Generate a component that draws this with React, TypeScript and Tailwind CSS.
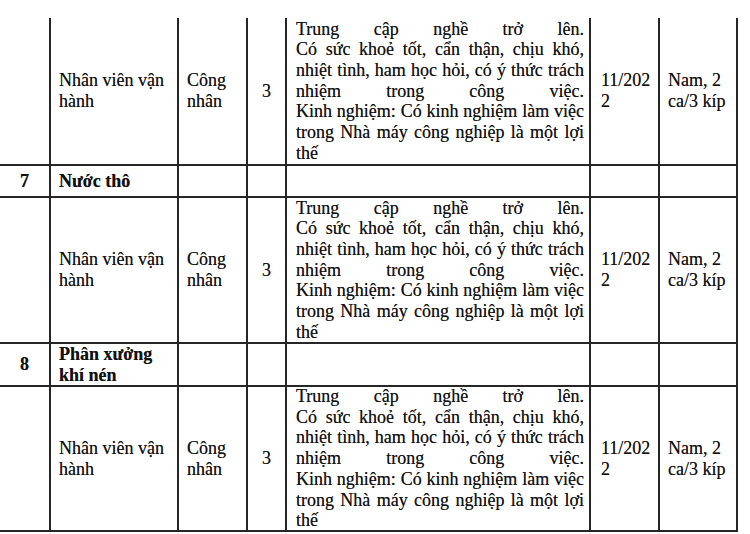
const descLines = [
  "Trung cập nghề trở lên.",
  "Có sức khoẻ tốt, cẩn thận, chịu khó,",
  "nhiệt tình, ham học hỏi, có ý thức trách",
  "nhiệm trong công việc.",
  "Kinh nghiệm: Có kinh nghiệm làm việc",
  "trong Nhà máy công nghiệp là một lợi",
];

const cell = "border-r-2 border-b-2 border-[#262626] flex flex-col justify-center";

function JobRow() {
  return (
    <>
      <div className={cell} />
      <div className={`${cell} pl-2`}>
        <div>Nhân viên vận</div>
        <div>hành</div>
      </div>
      <div className={`${cell} pl-2`}>
        <div>Công</div>
        <div>nhân</div>
      </div>
      <div className={`${cell} items-center`}>3</div>
      <div className={`${cell} pl-[9px] pr-[5px]`}>
        {descLines.map((l, i) => (
          <div key={i} className="whitespace-nowrap text-justify [text-align-last:justify]">
            {l}
          </div>
        ))}
        <div>thế</div>
      </div>
      <div className={`${cell} pl-[10px]`}>
        <div>11/202</div>
        <div>2</div>
      </div>
      <div className={`${cell} pl-2`}>
        <div>Nam, 2</div>
        <div>ca/3 kíp</div>
      </div>
    </>
  );
}

function SectionRow({ num, title }: { num: string; title: string[] }) {
  return (
    <>
      <div className={`${cell} items-center font-bold`}>{num}</div>
      <div className={`${cell} pl-2 font-bold`}>
        {title.map((t, i) => (
          <div key={i}>{t}</div>
        ))}
      </div>
      <div className={cell} />
      <div className={cell} />
      <div className={cell} />
      <div className={cell} />
      <div className={cell} />
    </>
  );
}

export default function App() {
  return (
    <div className="w-[750px] h-[534px] bg-white pt-[18px] overflow-hidden text-[#111] font-['Liberation_Serif','Times_New_Roman',serif] [text-shadow:0_0_0.5px_rgba(0,0,0,0.6)]">
      <div className="grid w-[738px] grid-cols-[51px_128px_69px_39px_304px_69px_78px] grid-rows-[148px_32px_146px_43px_145px] text-[18px] leading-[20.7px]">
        <JobRow />
        <SectionRow num="7" title={["Nước thô"]} />
        <JobRow />
        <SectionRow num="8" title={["Phân xưởng", "khí nén"]} />
        <JobRow />
      </div>
    </div>
  );
}
